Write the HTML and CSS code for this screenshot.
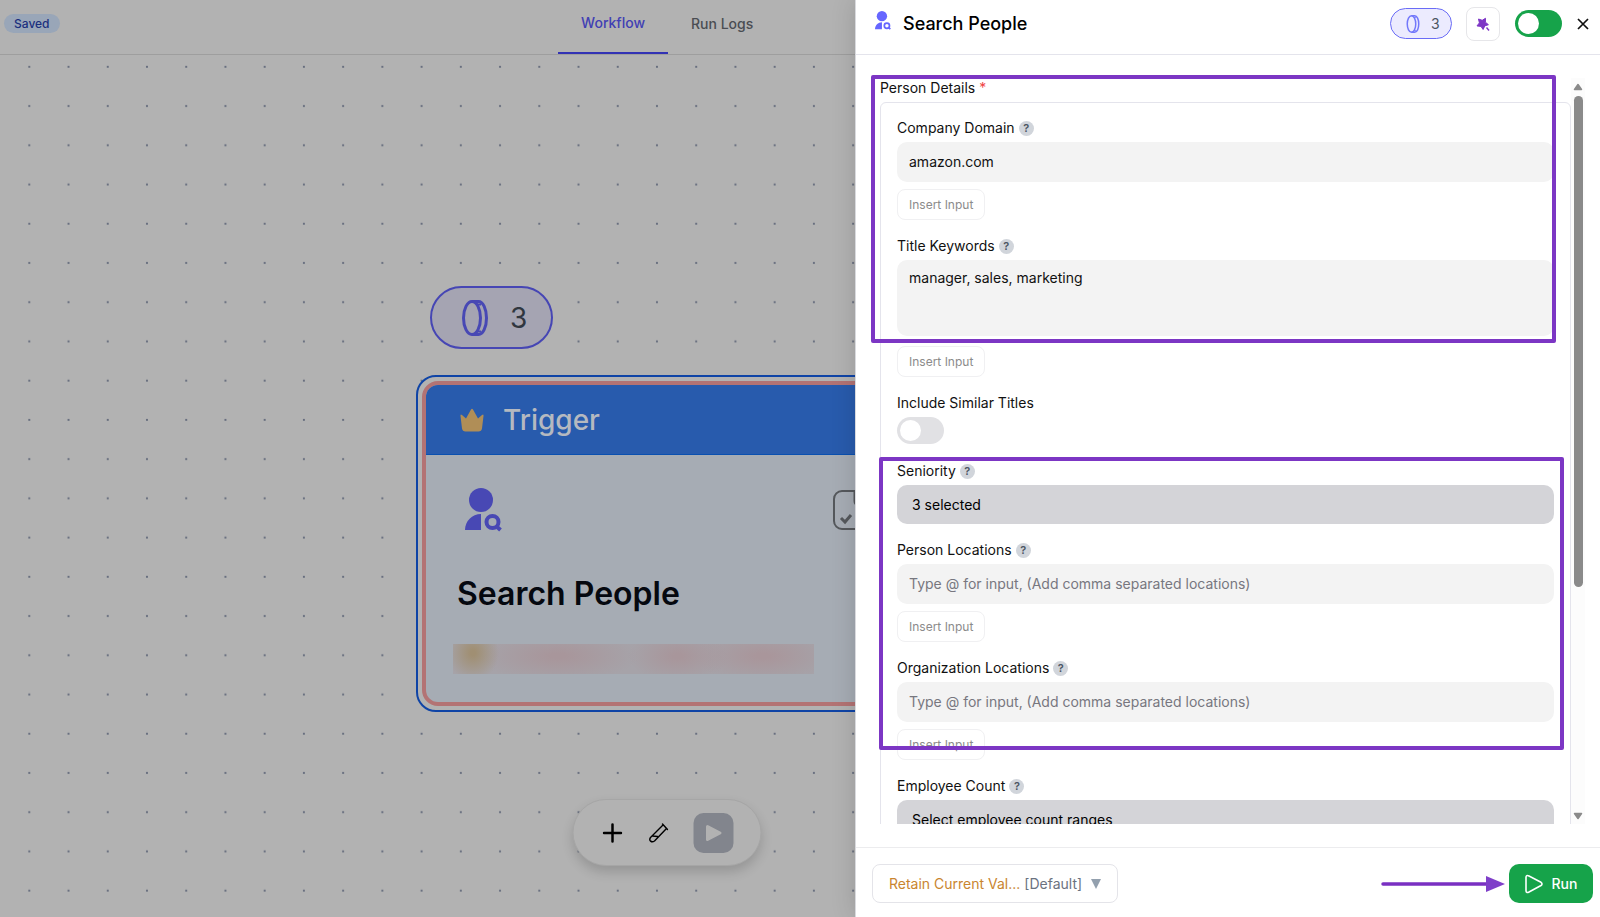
FILE: index.html
```
<!DOCTYPE html>
<html lang="en">
<head>
    <meta charset="UTF-8">
    <title>Search People</title>
    <link rel="stylesheet" href="styles.css">
</head>
<body>
    <!-- shared icons -->
    <svg class="sprite" aria-hidden="true">
        <symbol id="coin" viewBox="0 0 26 36">
            <g fill="none" stroke="currentColor" stroke-width="3">
                <ellipse cx="10" cy="18" rx="8.500" ry="16.500"/>
                <path d="M10 1.500h6.500c4.500 0 8 7.400 8 16.500s-3.500 16.500-8 16.500H10"/>
                <path d="M15 4.500h4M15 31.500h4" stroke-width="2"/>
            </g>
        </symbol>
        <symbol id="person" viewBox="0 0 37 44">
            <g fill="currentColor">
                <circle cx="16" cy="12" r="12"/>
                <path d="M16 26v16H0c0-9 7-16 16-16z"/>
            </g>
            <circle cx="27.500" cy="34" r="6" fill="none" stroke="currentColor" stroke-width="4"/>
            <path d="M31 38l4.500 4" stroke="currentColor" stroke-width="4"/>
        </symbol>
    </svg>

    <div class="workspace">
        <header class="topbar">
            <span class="saved">Saved</span>
            <nav class="tabs">
                <a href="#" class="tab active">Workflow</a>
                <a href="#" class="tab">Run Logs</a>
            </nav>
        </header>
        <main class="canvas">
            <svg class="dots" aria-hidden="true">
                <defs>
                    <pattern id="grid" x="9.700" y="-7.700" width="39.230" height="39.230" patternUnits="userSpaceOnUse">
                        <circle cx="19.600" cy="19.600" r="1.100" fill="#646b7c"/>
                    </pattern>
                </defs>
                <rect width="100%" height="100%" fill="url(#grid)"/>
            </svg>
            <div class="cost">
                <svg class="cost-icon" aria-hidden="true"><use href="#coin"/></svg>
                <span>3</span>
            </div>
            <section class="node">
                <div class="node-inner">
                    <div class="node-head">
                        <svg class="crown" viewBox="0 0 24 24" aria-hidden="true"><path d="M.500 8q-.3-2.500 1.500-1L6 10.500 11 1.500q1-1.500 2 0L18 10.500l4-3.500q1.800-1.500 1.500 1L22 20.500Q21.500 23.500 18.500 23.500h-13Q2.500 23.500 2 20.500z" fill="#b08e57"/></svg>
                        <span>Trigger</span>
                    </div>
                    <div class="node-body">
                        <div class="node-icons">
                            <svg class="node-person" aria-hidden="true"><use href="#person"/></svg>
                            <svg class="node-save" viewBox="0 0 40 40" fill="none" stroke="#55585c" stroke-width="2" aria-hidden="true"><rect x="1" y="1" width="38" height="38" rx="8"/><path d="M22 1v10q0 3 3 3M8 28l4 4 6-7" stroke-width="3"/></svg>
                        </div>
                        <h2>Search People</h2>
                        <div class="node-note"></div>
                    </div>
                </div>
            </section>
            <div class="tools">
                <button type="button" aria-label="Add">
                    <svg width="20" height="20" viewBox="0 0 20 20" aria-hidden="true"><path d="M10 1.500v17M1.500 10h17" stroke="#000" stroke-width="2.500" stroke-linecap="round"/></svg>
                </button>
                <button type="button" aria-label="Test">
                    <svg width="20" height="20" viewBox="0 0 20 20" fill="none" stroke="#000" stroke-width="1.400" stroke-linejoin="round" stroke-linecap="round" aria-hidden="true"><path d="M14.500 2L2 14.500c-2 3 1 5.500 4 3.500L18 5.500M14 1l5 5.500M4 13l5 .5"/></svg>
                </button>
                <button type="button" class="tool-play" aria-label="Play">
                    <svg width="18" height="18" viewBox="0 0 18 18" aria-hidden="true"><path d="M3 2.500L15.500 9 3 15.500z" fill="#b2b2b2" stroke="#b2b2b2" stroke-width="3" stroke-linejoin="round"/></svg>
                </button>
            </div>
        </main>
    </div>

    <aside class="panel">
        <header class="panel-head">
            <svg class="panel-icon" aria-hidden="true"><use href="#person"/></svg>
            <h1>Search People</h1>
            <div class="credits">
                <svg class="credits-icon" aria-hidden="true"><use href="#coin"/></svg>
                <span>3</span>
            </div>
            <button type="button" class="magic" aria-label="Assistant">
                <svg width="14" height="14" viewBox="0 0 14 14" aria-hidden="true"><path d="M9.500 1.300L9.400 5.200 12.400 7.700 8.800 8.900 7.100 12.500 5 9.400 1 8.900 3.400 5.900 2.500 2 6.200 3.300z" fill="#7e36c6" stroke="#7e36c6" stroke-linejoin="round"/><path d="M10.500 10.500l2.500 3" stroke="#7e36c6" stroke-width="1.400"/></svg>
            </button>
            <input type="checkbox" class="switch switch-on" aria-label="Enabled">
            <button type="button" class="close" aria-label="Close">
                <svg width="12" height="12" viewBox="0 0 12 12" aria-hidden="true"><path d="M1 1l10 10M11 1L1 11" stroke="#111" stroke-width="1.700"/></svg>
            </button>
        </header>

        <div class="panel-body">
            <div class="scroll">
                <div class="group-title">Person Details <span class="required">*</span></div>
                <div class="group">
                    <div class="field">
                        <div class="label"><label for="domain">Company Domain</label><span class="help">?</span></div>
                        <input type="text" class="text" id="domain" value="amazon.com">
                        <button type="button" class="insert">Insert Input</button>
                    </div>
                    <div class="field">
                        <div class="label"><label for="keywords">Title Keywords</label><span class="help">?</span></div>
                        <textarea class="text area" id="keywords">manager, sales, marketing</textarea>
                        <button type="button" class="insert">Insert Input</button>
                    </div>
                    <div class="field">
                        <div class="label"><label for="similar">Include Similar Titles</label></div>
                        <input type="checkbox" class="switch" id="similar">
                    </div>
                    <div class="field">
                        <div class="label"><label for="seniority">Seniority</label><span class="help">?</span></div>
                        <select class="pick" id="seniority"><option>3 selected</option></select>
                    </div>
                    <div class="field">
                        <div class="label"><label for="person-loc">Person Locations</label><span class="help">?</span></div>
                        <input type="text" class="text" id="person-loc" placeholder="Type @ for input, (Add comma separated locations)">
                        <button type="button" class="insert">Insert Input</button>
                    </div>
                    <div class="field">
                        <div class="label"><label for="org-loc">Organization Locations</label><span class="help">?</span></div>
                        <input type="text" class="text" id="org-loc" placeholder="Type @ for input, (Add comma separated locations)">
                        <button type="button" class="insert">Insert Input</button>
                    </div>
                    <div class="field">
                        <div class="label"><label for="employees">Employee Count</label><span class="help">?</span></div>
                        <select class="pick" id="employees"><option>Select employee count ranges</option></select>
                    </div>
                </div>
            </div>
            <div class="bar" aria-hidden="true">
                <svg width="10" height="8" viewBox="0 0 10 8"><path d="M5 1.500L8.500 6.500h-7z" fill="#8a8a8a" stroke="#8a8a8a" stroke-width="1.500" stroke-linejoin="round"/></svg>
                <div class="bar-track"><div class="bar-thumb"></div></div>
                <svg width="10" height="8" viewBox="0 0 10 8"><path d="M5 6.500L1.500 1.500h7z" fill="#8a8a8a" stroke="#8a8a8a" stroke-width="1.500" stroke-linejoin="round"/></svg>
            </div>
            <div class="mark mark-top"></div>
            <div class="mark mark-bottom"></div>
        </div>

        <footer class="panel-foot">
            <button type="button" class="retain" aria-haspopup="listbox">
                <span class="retain-name">Retain Current Val...</span>
                <span>[Default]</span>
                <svg width="10" height="10" viewBox="0 0 10 10" aria-hidden="true"><path d="M0 0h10L5 10z" fill="#93a0ae"/></svg>
            </button>
            <svg class="arrow" width="124" height="18" viewBox="0 0 124 18" aria-hidden="true"><path d="M2 9h104" stroke="#7a30c2" stroke-width="3.500" stroke-linecap="round"/><path d="M105 1l19 8-19 8z" fill="#7f3fc9"/></svg>
            <button type="button" class="run">
                <svg width="18" height="20" viewBox="0 0 18 20" fill="none" stroke="#fff" stroke-width="1.600" stroke-linejoin="round" aria-hidden="true"><path d="M1 3.500Q1 .5 4 2l12 6.300q2 1.700 0 3.200L4 18q-3 1.500-3-1.500z"/></svg>
                <span>Run</span>
            </button>
        </footer>
    </aside>
</body>
</html>
```

FILE: styles.css
```
*{
    margin: 0;
    padding: 0;
    box-sizing: border-box;
}
body{
    position: relative;
    height: 100vh;
    overflow: hidden;
    background-color: #b2b2b2;
    font-family: Inter, "Liberation Sans", sans-serif;
    font-size: 14px;
    line-height: 20px;
    color: #111;
}
a{
    text-decoration: none;
}
button, input, textarea, select{
    font: inherit;
    color: inherit;
    border: none;
    outline: none;
}
button{
    background: none;
    cursor: pointer;
}
svg{
    display: block;
    flex-shrink: 0;
}
.sprite{
    position: absolute;
    width: 0;
    height: 0;
}

/* workspace */
.workspace{
    width: 83.4%;
    height: 100%;
    display: flex;
    flex-direction: column;
}
.topbar{
    position: relative;
    height: 55px;
    border-bottom: 1px solid #9e9e9e;
    display: flex;
    justify-content: center;
}
.saved{
    position: absolute;
    left: 4px;
    top: 14px;
    padding: 0 10px;
    border-radius: 10px;
    background-color: #99a6b8;
    color: #1b2f7e;
    font-size: 12px;
    font-weight: 500;
    line-height: 19px;
}
.tabs{
    display: flex;
}
.tab{
    height: 54px;
    padding: 0 23px;
    line-height: 47px;
    font-weight: 500;
    color: #4a4d52;
}
.tab.active{
    line-height: 46px;
    color: #4140b4;
    border-bottom: 2px solid #3232b4;
}
.canvas{
    position: relative;
    flex: 1;
}
.dots{
    position: absolute;
    width: 100%;
    height: 100%;
}
.cost{
    position: absolute;
    left: 430px;
    top: 231px;
    width: 123px;
    height: 63px;
    padding-left: 30px;
    border: 2px solid #4646b4;
    border-radius: 32px;
    background-color: #a5a4b2;
    display: flex;
    align-items: center;
    gap: 22px;
    font-size: 28px;
    color: #30363f;
}
.cost-icon{
    width: 26px;
    height: 36px;
    color: #4848b4;
}

/* node card */
.node{
    position: absolute;
    left: 416px;
    top: 320px;
    width: 560px;
    padding: 4px;
    border: 2px solid #0f44a6;
    border-radius: 20px;
    background-color: #b2b2b2;
}
.node-inner{
    border: 4px solid #b37374;
    border-radius: 16px;
    overflow: hidden;
    background-color: #a6acb4;
}
.node-head{
    height: 70px;
    padding-left: 34px;
    display: flex;
    align-items: center;
    gap: 19px;
    background-color: #285bad;
    border-bottom: 1px solid #0a50b0;
    color: #b5b9c0;
    font-size: 28px;
    font-weight: 500;
}
.crown{
    width: 24px;
    height: 24px;
}
.node-body{
    padding: 33px 27px 28px;
}
.node-icons{
    height: 44px;
    display: flex;
    align-items: center;
    padding-left: 12px;
}
.node-person{
    width: 37px;
    height: 44px;
    color: #4848b4;
}
.node-save{
    width: 40px;
    height: 40px;
    margin-left: 331px;
}
.node h2{
    margin: 42px 0 30px 4px;
    font-size: 32px;
    line-height: 40px;
    font-weight: 600;
    color: #05080f;
}
.node-note{
    width: 361px;
    height: 30px;
    background: radial-gradient(26px 28px at 20px 9px, #a08f73 10%, #a08f7300),
        radial-gradient(80px 26px at 105px 12px, #a8969b 10%, #a8969b00),
        radial-gradient(50px 26px at 225px 12px, #a8969b 10%, #a8969b00),
        radial-gradient(70px 26px at 310px 12px, #a9969b 10%, #a9969b00),
        #a6a3a9;
}

/* bottom toolbar */
.tools{
    position: absolute;
    left: 50%;
    bottom: 51px;
    transform: translateX(-50%);
    width: 189px;
    height: 67px;
    padding: 0 27px 0 29px;
    border: 1px solid #a6a6a6;
    border-radius: 34px;
    background-color: #b2b2b2;
    box-shadow: 0 6px 12px rgba(0, 0, 0, .16);
    display: flex;
    align-items: center;
    justify-content: space-between;
}
.tool-play{
    width: 40px;
    height: 40px;
    border-radius: 10px;
    background-color: #82858d;
    display: flex;
    align-items: center;
    justify-content: center;
}

/* side panel */
.panel{
    position: absolute;
    top: 0;
    right: 0;
    width: 46.5%;
    height: 100%;
    background-color: #fff;
    box-shadow: 0 0 0 1px #d9dade, 0 0 24px rgba(0, 0, 0, .16);
    display: flex;
    flex-direction: column;
}
.panel-head{
    height: 55px;
    padding: 0 11px 7px 19px;
    border-bottom: 1px solid #e4e4ec;
    display: flex;
    align-items: center;
}
.panel-icon{
    width: 16px;
    height: 19px;
    margin-bottom: 6px;
    color: #6666ff;
}
.panel-head h1{
    flex: 1;
    margin-left: 12px;
    font-size: 18px;
    font-weight: 500;
    color: #000;
}
.credits{
    width: 62px;
    height: 31px;
    padding-left: 15px;
    border: 1px solid #6a6cf6;
    border-radius: 16px;
    background-color: #ecebfe;
    display: flex;
    align-items: center;
    gap: 11px;
    color: #4b5563;
}
.credits-icon{
    width: 14px;
    height: 18px;
    color: #7378fb;
}
.magic{
    width: 34px;
    height: 34px;
    margin: 0 15px 0 14px;
    border: 1px solid #e6e6e9;
    border-radius: 8px;
    display: flex;
    align-items: center;
    justify-content: center;
}
.switch{
    display: block;
    flex-shrink: 0;
    width: 47px;
    height: 27px;
    padding: 3px;
    border-radius: 14px;
    background-color: #e1e1e4;
    appearance: none;
}
.switch::before{
    content: "";
    display: block;
    width: 21px;
    height: 21px;
    border-radius: 50%;
    background-color: #fff;
}
.switch-on{
    background-color: #16a34a;
}
.close{
    margin-left: 15px;
}

.panel-body{
    position: relative;
    flex: 1;
    min-height: 0;
    padding: 23px 15px 23px 24px;
    display: flex;
}
.scroll{
    flex: 1;
    overflow: hidden;
}
.required{
    color: #ef4444;
}
.group{
    margin-top: 4px;
    padding: 15px 16px;
    border: 1px solid #e4e4ec;
    border-radius: 6px;
    display: flex;
    flex-direction: column;
    gap: 16px;
}
.group .switch{
    margin-bottom: 1px;
}
.label{
    display: flex;
    align-items: center;
    gap: 4px;
    margin-bottom: 4px;
}
.help{
    width: 15px;
    height: 15px;
    border-radius: 50%;
    background-color: #d1d5db;
    color: #4b5563;
    font-size: 11px;
    font-weight: 600;
    line-height: 15px;
    text-align: center;
}
.text{
    display: block;
    width: 100%;
    height: 40px;
    padding: 0 12px 2px;
    border-radius: 10px;
    background-color: #f3f3f3;
}
.text::placeholder{
    color: #77777f;
}
.area{
    height: 76px;
    margin-bottom: 10px;
    padding-top: 8px;
    resize: none;
}
.insert{
    display: block;
    height: 31px;
    margin-top: 7px;
    padding: 0 11px;
    border: 1px solid #f0f0f2;
    border-radius: 8px;
    font-size: 12px;
    color: #8b8b8b;
}
.area + .insert{
    margin-top: 0;
}
.pick{
    display: block;
    width: 100%;
    height: 39px;
    padding: 0 15px;
    border-radius: 10px;
    background-color: #d4d4d8;
    color: #000;
    appearance: none;
}

/* scroll bar */
.bar{
    width: 14px;
    padding: 5px 0 4px;
    background-color: #fcfcfc;
    display: flex;
    flex-direction: column;
    align-items: center;
    gap: 5px;
}
.bar-track{
    flex: 1;
}
.bar-thumb{
    width: 9px;
    height: 69%;
    border-radius: 5px;
    background-color: #8a8a8a;
}

/* purple highlight frames */
.mark{
    position: absolute;
    border: 4px solid #7c36c4;
    border-radius: 2px;
    pointer-events: none;
}
.mark-top{
    left: 15px;
    right: 44px;
    top: 20px;
    height: 268px;
}
.mark-bottom{
    left: 23px;
    right: 36px;
    top: 402px;
    height: 293px;
}

.panel-foot{
    height: 70px;
    padding: 2px 7px 0 16px;
    border-top: 1px solid #ececee;
    display: flex;
    align-items: center;
}
.retain{
    height: 39px;
    padding: 0 16px;
    border: 1px solid #e4e4e9;
    border-radius: 8px;
    display: flex;
    align-items: center;
    gap: 4px;
    color: #6b7280;
}
.retain svg{
    margin-left: 5px;
}
.retain-name{
    color: #c9852f;
}
.arrow{
    margin-left: auto;
    margin-right: 4px;
}
.run{
    width: 84px;
    height: 39px;
    border-radius: 10px;
    background-color: #16a34a;
    color: #fff;
    font-weight: 500;
    display: flex;
    align-items: center;
    justify-content: center;
    gap: 9px;
}
```
